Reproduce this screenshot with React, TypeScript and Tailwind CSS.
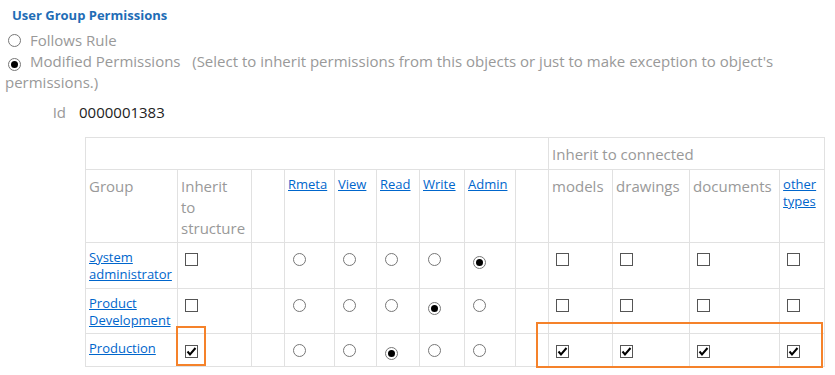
import React from 'react';

const Checkbox = ({ checked = false }: { checked?: boolean }) => (
  <span className="mt-[4px] ml-[4px] inline-flex h-[13px] w-[13px] items-center justify-center border border-[#555] bg-white">
    {checked && (
      <svg width="11" height="11" viewBox="0 0 11 11">
        <path d="M1.5 5.5 L4 8.5 L9.5 2" stroke="#000" strokeWidth="2" fill="none" />
      </svg>
    )}
  </span>
);

const Radio = ({ checked = false, className = 'mt-[4px] ml-[5px]' }: { checked?: boolean; className?: string }) => (
  <span className={`${className} inline-flex h-[13px] w-[13px] items-center justify-center rounded-full border border-[#777] bg-white`}>
    {checked && <span className="h-[7px] w-[7px] rounded-full bg-black" />}
  </span>
);

const Link = ({ children }: { children: React.ReactNode }) => (
  <a href="#" className="text-[#0066cc] underline">
    {children}
  </a>
);

const rows = [
  { name: ['System', 'administrator'], inherit: false, level: 4, connected: false, h: 'h-[46px]' },
  { name: ['Product', 'Development'], inherit: false, level: 3, connected: false, h: 'h-[45px]' },
  { name: ['Production'], inherit: true, level: 2, connected: true, h: 'h-[33px]' },
];

const levels = ['Rmeta', 'View', 'Read', 'Write', 'Admin'];
const connected = ['models', 'drawings', 'documents'];

const td = 'border border-[#e1e1e1] px-[3px] pt-[6px] align-top';
const linkTd = `${td} text-[13px] leading-[17px]`;

const App = () => {
  return (
    <div className="h-[375px] w-[835px] bg-white font-['Open_Sans',sans-serif] text-[15px] text-[#999]">
      <div className="pl-[12px] pt-[6px] text-[13px] font-bold leading-[18px] text-[#1f6db6]">
        User Group Permissions
      </div>

      <div className="w-[780px] pl-[5px] pt-[6px] leading-[21px]">
        <div>
          <Radio className="ml-[3px] mr-[9px] align-[-1px]" />
          Follows Rule
        </div>
        <div>
          <Radio checked className="ml-[3px] mr-[9px] align-[-1px]" />
          {"Modified Permissions\u00a0\u00a0 (Select to inherit permissions from this objects or just to make exception to object's permissions.)"}
        </div>
      </div>

      <div className="mt-[9px] flex leading-[21px]">
        <span className="w-[69px] pr-[3px] text-right">Id</span>
        <span className="pl-[10px] text-[#222]">0000001383</span>
      </div>

      {/* Permissions table */}
      <div className="relative ml-[85px] mt-[14px] w-[739px]">
        <table className="w-[739px] table-fixed border-collapse">
          <colgroup>
            <col className="w-[92px]" />
            <col className="w-[74px]" />
            <col className="w-[33px]" />
            <col className="w-[50px]" />
            <col className="w-[42px]" />
            <col className="w-[43px]" />
            <col className="w-[45px]" />
            <col className="w-[51px]" />
            <col className="w-[33px]" />
            <col className="w-[64px]" />
            <col className="w-[77px]" />
            <col className="w-[90px]" />
            <col className="w-[45px]" />
          </colgroup>
          <tbody>
            <tr className="h-[32px]">
              <td colSpan={9} className={td} />
              <td colSpan={4} className={`${td} leading-[21px]`}>Inherit to connected</td>
            </tr>
            <tr className="h-[73px]">
              <td className={`${td} leading-[21px]`}>Group</td>
              <td className={`${td} leading-[21px]`}>
                Inherit
                <br />
                to
                <br />
                structure
              </td>
              <td className={td} />
              {levels.map((l) => (
                <td key={l} className={linkTd}>
                  <Link>{l}</Link>
                </td>
              ))}
              <td className={td} />
              {connected.map((c) => (
                <td key={c} className={`${td} leading-[21px]`}>{c}</td>
              ))}
              <td className={linkTd}>
                <Link>
                  other
                  <br />
                  types
                </Link>
              </td>
            </tr>
            {rows.map((r) => (
              <tr key={r.name.join(' ')} className={r.h}>
                <td className={linkTd}>
                  <Link>
                    {r.name.map((n, i) => (
                      <React.Fragment key={n}>
                        {i > 0 && <br />}
                        {n}
                      </React.Fragment>
                    ))}
                  </Link>
                </td>
                <td className={td}>
                  <Checkbox checked={r.inherit} />
                </td>
                <td className={td} />
                {levels.map((l, i) => (
                  <td key={l} className={td}>
                    <Radio checked={i === r.level} />
                  </td>
                ))}
                <td className={td} />
                {[0, 1, 2, 3].map((i) => (
                  <td key={i} className={td}>
                    <Checkbox checked={r.connected} />
                  </td>
                ))}
              </tr>
            ))}
          </tbody>
        </table>

        {/* highlight boxes */}
        <div className="pointer-events-none absolute left-[91px] top-[189px] h-[40px] w-[30px] border-2 border-[#f5822a]" />
        <div className="pointer-events-none absolute left-[451px] top-[185px] h-[46px] w-[287px] border-2 border-[#f5822a]" />
      </div>
    </div>
  );
};

export default App;
